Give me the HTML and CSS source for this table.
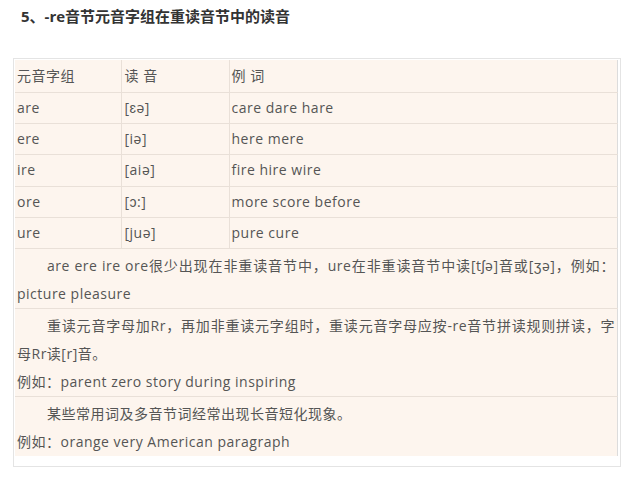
FILE: index.html
```html
<!DOCTYPE html>
<html lang="zh-CN">
<head>
<meta charset="utf-8">
<link rel="stylesheet" href="styles.css">
</head>
<body>
<h2 class="title">5、-re音节元音字组在重读音节中的读音</h2>
<div class="box">
  <table class="tbl">
    <colgroup><col class="c1"><col class="c2"><col class="c3"></colgroup>
    <tr class="head"><td>元音字组</td><td class="ipa">读 音</td><td>例 词</td></tr>
    <tr><td>are</td><td class="ipa">[ɛə]</td><td>care dare hare</td></tr>
    <tr><td>ere</td><td class="ipa">[iə]</td><td>here mere</td></tr>
    <tr><td>ire</td><td class="ipa">[aiə]</td><td>fire hire wire</td></tr>
    <tr><td>ore</td><td class="ipa">[ɔ:]</td><td>more score before</td></tr>
    <tr><td>ure</td><td class="ipa">[juə]</td><td>pure cure</td></tr>
    <tr class="note"><td colspan="3"><p class="para">are ere ire ore很少出现在非重读音节中，ure在非重读音节中读[tʃə]音或[ʒə]，例如：picture pleasure</p></td></tr>
    <tr class="note"><td colspan="3"><p class="para">重读元音字母加Rr，再加非重读元字组时，重读元音字母应按-re音节拼读规则拼读，字母Rr读[r]音。</p><p class="ex">例如：parent zero story during inspiring</p></td></tr>
    <tr class="note last"><td colspan="3"><p class="para">某些常用词及多音节词经常出现长音短化现象。</p><p class="ex">例如：orange very American paragraph</p></td></tr>
  </table>
</div>
</body>
</html>
```
FILE: styles.css
```css
html, body {
  margin: 0;
  padding: 0;
  background: #ffffff;
}
body {
  font-family: "Open Sans", "Noto Sans CJK SC", sans-serif;
  font-size: 14px;
  letter-spacing: 0.5px;
  color: #555555;
}
.title {
  margin: 0;
  padding: 7px 0 0 21px;
  height: 58px;
  box-sizing: border-box;
  font-size: 15px;
  line-height: 18px;
  font-weight: bold;
  letter-spacing: 0;
  color: #333333;
}
.box {
  margin-left: 13px;
  width: 608px;
  box-sizing: border-box;
  border: 1px solid #e4e4e4;
  padding: 1px 2px 10px 1px;
}
.tbl {
  width: 100%;
  border-collapse: collapse;
  background: #fdf5ee;
  border-right: 1px solid #dcdcdc;
}
.c1 { width: 106px; }
.c2 { width: 108px; }
.tbl td {
  border-bottom: 1px solid #e9e0d8;
  height: 31.4px;
  padding: 0 2px;
  line-height: 20px;
  vertical-align: middle;
  box-sizing: border-box;
}
.tbl .head td { height: 32px; }
.tbl td + td { border-left: 1px solid #e9e0d8; }
.tbl td.ipa { padding-left: 3px; }
.tbl .note td {
  padding: 3px 2px 0 2px;
  height: auto;
  vertical-align: top;
}
.tbl .note.last td { border-bottom: none; }
.para {
  margin: 0;
  text-indent: 30px;
  line-height: 28px;
  text-align: justify;
}
.ex {
  margin: 0;
  line-height: 28px;
}
```
